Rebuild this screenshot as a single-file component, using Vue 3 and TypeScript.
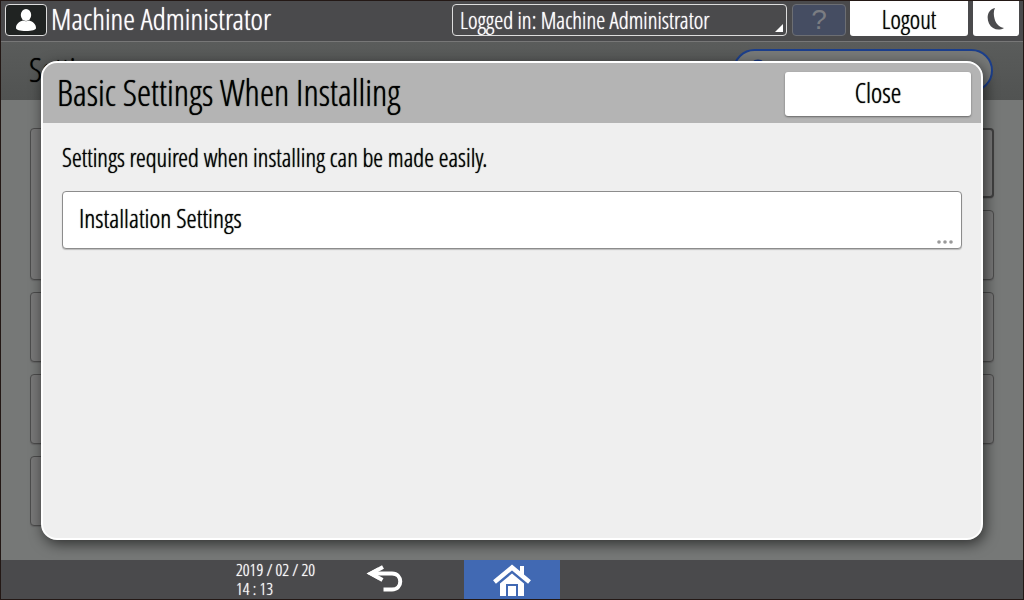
<script setup lang="ts">
import { ref } from 'vue'

interface Tile {
  id: string
  tall?: boolean
  focused?: boolean
}

const account = ref('Logged in: Machine Administrator')
const search = ref('')
const leftTiles: Tile[] = [{ id: 'l1', tall: true }, { id: 'l2' }, { id: 'l3' }, { id: 'l4' }]
const rightTiles: Tile[] = [{ id: 'r1', focused: true }, { id: 'r2' }, { id: 'r3' }, { id: 'r4' }]
</script>

<template>
  <div class="screen">
    <header class="topbar">
      <span class="user-badge">
        <svg width="22" height="24" viewBox="0 0 22 24" aria-hidden="true">
          <ellipse cx="11" cy="7" rx="5.200" ry="6" fill="#fff" />
          <path d="M1 20c0-4 3-6.500 7-7.500 2 1 4 1 6 0 4 1 7 3.500 7 7.500 0 2-4 3-10 3S1 22 1 20z" fill="#fff" />
        </svg>
      </span>
      <h1 class="title">Machine Administrator</h1>
      <div class="account">
        <select v-model="account" aria-label="Account">
          <option>Logged in: Machine Administrator</option>
        </select>
      </div>
      <button class="help" type="button" aria-label="Help" disabled>?</button>
      <button class="logout" type="button">Logout</button>
      <button class="sleep" type="button" aria-label="Sleep">
        <svg width="18" height="24" viewBox="0 0 18 24" aria-hidden="true">
          <path d="M8 1C1 2.500-1 10 2 16.500 5 22.500 12 24 17 21 11.500 20 8.500 16 7.500 11.500 6.500 7.500 6.500 4 8 1z" fill="#4b4b4d" />
        </svg>
      </button>
    </header>

    <main class="stage">
      <div class="page-head">
        <h2>Settings</h2>
        <div class="search">
          <svg width="20" height="26" viewBox="0 0 20 26" aria-hidden="true">
            <circle cx="9" cy="9" r="7" fill="none" stroke="#16357f" stroke-width="3" />
            <path d="M13 15l5 7" stroke="#16357f" stroke-width="3" />
          </svg>
          <input v-model="search" type="text" aria-label="Search" />
        </div>
      </div>
      <div class="tiles">
        <div class="column">
          <div v-for="t in leftTiles" :key="t.id" class="tile" :class="{ tall: t.tall }"></div>
        </div>
        <div class="column">
          <div v-for="t in rightTiles" :key="t.id" class="tile" :class="{ focused: t.focused }"></div>
        </div>
      </div>

      <section class="dialog" role="dialog" aria-labelledby="dialog-title">
        <div class="dialog-head">
          <h2 id="dialog-title">Basic Settings When Installing</h2>
          <button class="close" type="button">Close</button>
        </div>
        <div class="dialog-body">
          <p>Settings required when installing can be made easily.</p>
          <button class="entry" type="button">
            <span>Installation Settings</span>
            <svg class="more" width="16" height="4" viewBox="0 0 16 4" aria-hidden="true">
              <g fill="#999"><circle cx="2" cy="2" r="1.800" /><circle cx="8" cy="2" r="1.800" /><circle cx="14" cy="2" r="1.800" /></g>
            </svg>
          </button>
        </div>
      </section>
    </main>

    <footer class="bottombar">
      <div class="status">
        <time class="clock">
          <span>2019 / 02 / 20</span>
          <span>14 : 13</span>
        </time>
        <button class="back" type="button" aria-label="Back">
          <svg width="38" height="30" viewBox="0 0 38 30" aria-hidden="true">
            <path d="M17 3L5 9.500 16.500 16" fill="none" stroke="#fff" stroke-width="4" />
            <path d="M0.500 9.500L12 3.500v12z" fill="#fff" />
            <path d="M6 9.500h20c11 0 11 16 0 16h-8.500" fill="none" stroke="#fff" stroke-width="4" />
          </svg>
        </button>
      </div>
      <button class="home" type="button" aria-label="Home">
        <svg width="38" height="32" viewBox="0 0 38 32" aria-hidden="true">
          <path d="M7 19.500L19 9.500l12 10V32H25V20H13v12H7z" fill="#fff" />
          <path d="M15 22h8v10h-8z" fill="#fff" />
          <path d="M27 2h4v12l-4-4z" fill="#fff" />
          <path d="M1.500 18L19 3.500 36.500 18" fill="none" stroke="#fff" stroke-width="4.500" />
        </svg>
      </button>
    </footer>
  </div>
</template>

<style>
body {
  margin: 0;
}
</style>

<style scoped>
* {
  box-sizing: border-box;
}

.screen {
  display: flex;
  flex-direction: column;
  min-height: 100vh;
  border: 1px solid #231815;
  background: #767877;
  color: #000;
  font-family: 'Open Sans Condensed Light', 'Open Sans Condensed', 'Roboto Condensed', 'Liberation Sans', sans-serif;
  font-weight: 300;
  text-shadow: 0 0 1px currentColor;
}

h1,
h2,
p {
  margin: 0;
  font-weight: inherit;
}

button,
select,
input {
  margin: 0;
  padding: 0;
  border: 0;
  font: inherit;
  color: inherit;
  text-shadow: inherit;
}

.topbar {
  display: flex;
  align-items: flex-start;
  height: 41px;
  padding: 0 4px;
  background: #4a4a4c;
  border-bottom: 1px solid #777;
  color: #fff;
}

.user-badge {
  display: flex;
  align-items: center;
  justify-content: center;
  width: 42px;
  height: 32px;
  margin-top: 3px;
  border: 1px solid #ddd;
  border-radius: 4px;
  background: #202322;
}

.title {
  flex: 1;
  padding-left: 4px;
  font-size: 30px;
  line-height: 36px;
  white-space: nowrap;
}

.account {
  position: relative;
  width: 335px;
  height: 32px;
  margin: 3px 5px 0 0;
  border: 1px solid #ddd;
  border-radius: 4px;
}

.account select {
  appearance: none;
  display: block;
  width: 100%;
  height: 30px;
  padding-left: 7px;
  background: transparent;
  font-size: 23px;
  line-height: 30px;
}

.account::after {
  content: '';
  position: absolute;
  right: 3px;
  bottom: 3px;
  border: 4px solid #fff;
  border-top-color: transparent;
  border-left-color: transparent;
  pointer-events: none;
}

.help {
  width: 54px;
  height: 32px;
  margin: 3px 4px 0 0;
  border: 1px solid #6c6e73;
  border-radius: 4px;
  background: #454d62;
  color: #7b7d82;
  font-family: 'Liberation Sans', sans-serif;
  font-size: 28px;
  line-height: 30px;
  text-shadow: none;
}

.logout {
  width: 118px;
  height: 35px;
  margin-right: 5px;
  border-radius: 0 0 3px 3px;
  background: #fff;
  color: #000;
  font-size: 25px;
}

.sleep {
  display: flex;
  align-items: center;
  justify-content: center;
  width: 46px;
  height: 35px;
  border-radius: 0 0 3px 3px;
  background: #fff;
}

.stage {
  position: relative;
  flex: 1;
}

.page-head {
  display: flex;
  align-items: flex-start;
  height: 58px;
  padding: 7px 30px 0 28px;
  background: linear-gradient(#5a5c5b, #515352);
}

.page-head h2 {
  flex: 1;
  font-size: 33px;
  line-height: 42px;
}

.search {
  display: flex;
  align-items: flex-start;
  width: 260px;
  height: 43px;
  padding: 8px 14px;
  border: 2px solid #1c3f8c;
  border-radius: 22px;
  background: #777978;
}

.search input {
  flex: 1;
  min-width: 0;
  background: transparent;
}

.tiles {
  display: grid;
  grid-template-columns: 1fr 1fr;
  gap: 12px;
  padding: 28px 29px 34px;
}

.column {
  display: flex;
  flex-direction: column;
  gap: 12px;
}

.tile {
  height: 70px;
  border: 1px solid #4c4c4c;
  border-radius: 4px;
  background: #777;
  box-shadow: 0 1px 1px #666;
}

.tile.tall {
  height: 152px;
}

.tile.focused {
  border: 2px solid #404040;
}

.dialog {
  position: absolute;
  inset: 19px 40px 20px;
  display: flex;
  flex-direction: column;
  overflow: hidden;
  border: 2px solid #fff;
  border-radius: 16px;
  background: #efefef;
  box-shadow: 2px 4px 14px rgba(0, 0, 0, 0.6);
}

.dialog-head {
  display: flex;
  align-items: center;
  justify-content: space-between;
  height: 60px;
  padding: 0 10px 0 14px;
  background: #b4b4b4;
}

.dialog-head h2 {
  font-size: 36px;
  line-height: 58px;
}

.close {
  width: 186px;
  height: 44px;
  margin-top: 2px;
  padding-bottom: 4px;
  border-radius: 3px;
  background: #fff;
  box-shadow: 0 1px 2px #666;
  font-size: 27px;
}

.dialog-body {
  padding: 18px 19px;
}

.dialog-body p {
  margin-bottom: 18px;
  font-size: 25px;
  line-height: 32px;
}

.entry {
  position: relative;
  display: flex;
  align-items: center;
  width: 100%;
  height: 58px;
  padding: 0 16px 4px;
  border: 1px solid #8c8c8c;
  border-radius: 4px;
  background: #fff;
  box-shadow: 0 1px 1px #bbb;
  font-size: 26px;
}

.more {
  position: absolute;
  right: 8px;
  bottom: 4px;
}

.bottombar {
  display: grid;
  grid-template-columns: 1fr 96px 1fr;
  height: 39px;
  background: #4a4a4c;
  color: #fff;
}

.status {
  display: flex;
  align-items: flex-start;
  justify-content: flex-end;
  padding-right: 60px;
}

.clock {
  display: flex;
  flex-direction: column;
  width: 130px;
  font-size: 17px;
  line-height: 19px;
}

.back,
.home {
  display: flex;
  align-items: center;
  justify-content: center;
}

.back {
  width: 38px;
  height: 38px;
  background: transparent;
}

.home {
  background: #4169b3;
}
</style>
